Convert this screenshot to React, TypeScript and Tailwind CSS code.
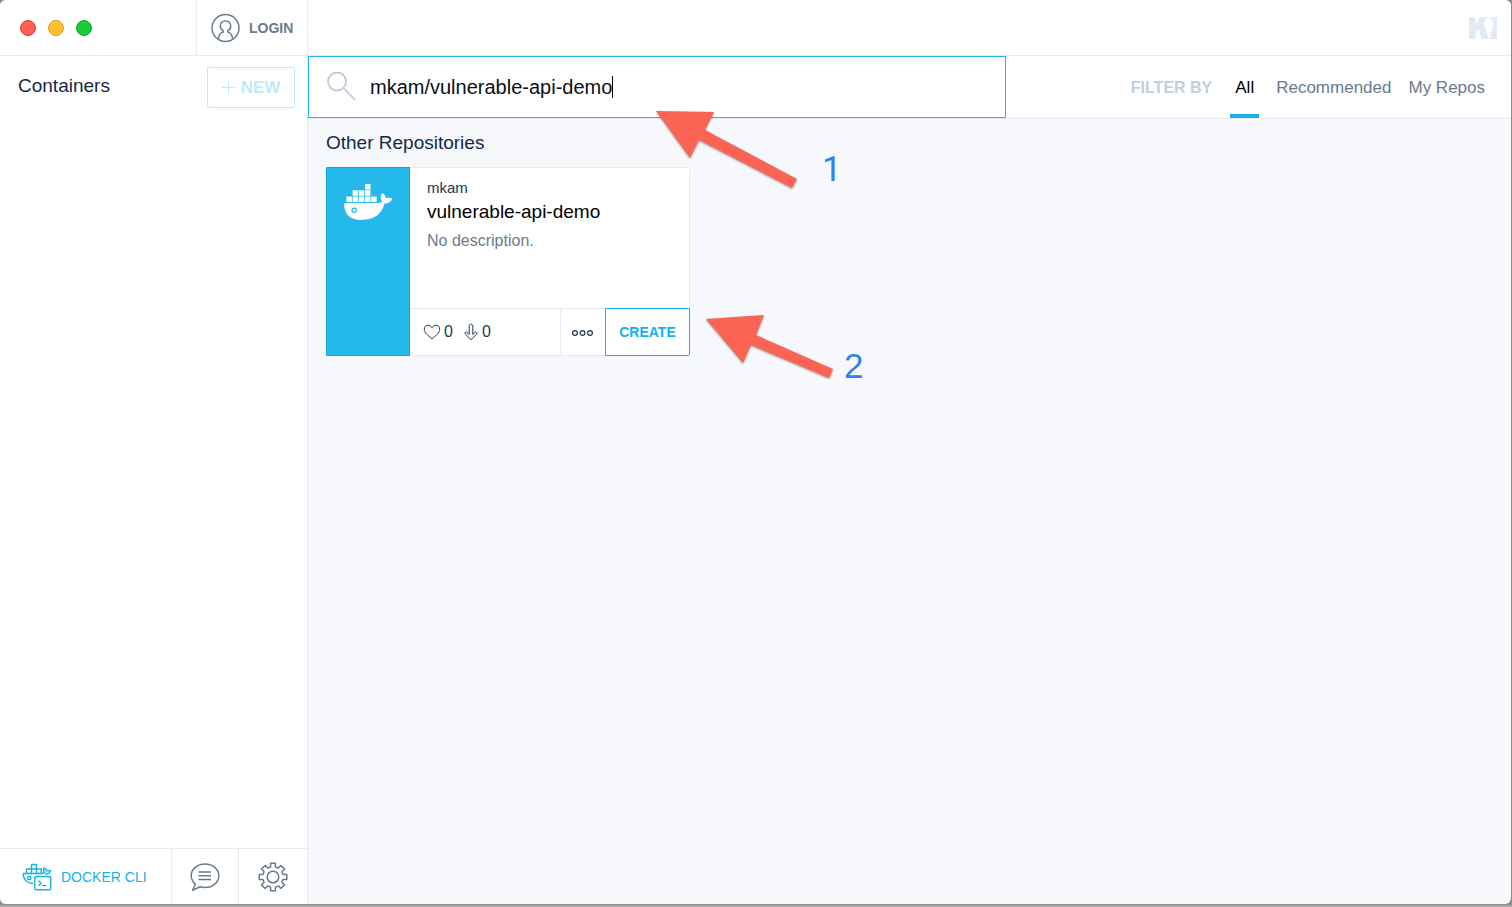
import { useState } from "react";
import type { ReactNode } from "react";

function UserIcon() {
  return (
    <svg viewBox="0 0 30 30" className="size-[30px]" fill="none" stroke="#6b7a8d" strokeWidth="1.5" aria-hidden="true">
      <circle cx="14.500" cy="15" r="13.5" />
      <path d="M7.500 26.400c0-4 1-6.300 4.600-7.300l.2-1.200c-2-1.100-3-2.800-3-4.900 0-2.900 2.200-5 5.200-5s5.200 2.100 5.200 5c0 2.100-1 3.800-3 4.900l.2 1.200c3.600 1 4.600 3.300 4.600 7.300" />
    </svg>
  );
}

function SearchIcon() {
  return (
    <svg viewBox="0 0 30 30" className="size-[30px] shrink-0" fill="none" stroke="#c0c9dc" strokeWidth="1.8" aria-hidden="true">
      <circle cx="11" cy="9.500" r="9" />
      <path d="M18 16.500l11 11.500" />
    </svg>
  );
}

function KitematicLogo() {
  return (
    <svg viewBox="0 0 28 22" className="h-[22px] w-7" fill="#e2eaf3" role="img" aria-label="Kitematic">
      <path d="M0 0h6.500v8L11 0h7.500l-4 6.500L19.500 22H12.500L9.500 12.500l-3 4V22H0z" />
      <path d="M20.500 0H28v22h-7.500L24.700 6.500z" />
    </svg>
  );
}

function WhaleIcon() {
  return (
    <svg viewBox="0 0 50 38" className="h-[38px] w-[50px]" aria-hidden="true">
      <g fill="#fff">
        <path d="M22 1h5.500v5.500H22zM9.600 7.300h5.500v5.500H9.600zM15.800 7.300h5.500v5.500h-5.500zM22 7.300h5.500v5.500H22zM3.400 13.600h5.500v5.500H3.400zM9.600 13.600h5.500v5.500H9.600zM15.800 13.600h5.500v5.500h-5.500zM22 13.600h5.500v5.500H22zM28.200 13.600h5.500v5.500h-5.500z" />
        <path d="M1.200 20H34c2.400 0 4.200-.5 5.300-1.600-2.300-2.600-2.200-5.600 0-8.400 2.400 1.500 3.700 3.300 3.800 5.200 2.400-.9 4.600-.6 6.400.5-1.400 2.800-4.200 4.600-8 4.900C39 30.500 32 37 18 37 6.500 37 .7 30.500 1.200 20z" />
      </g>
      <circle cx="11.200" cy="27.300" r="2.200" fill="#fff" stroke="#24b8eb" strokeWidth="1.2" />
    </svg>
  );
}

function HeartIcon() {
  return (
    <svg viewBox="0 0 18 16" className="h-4 w-[18px]" fill="none" stroke="#22384f" strokeWidth="1" aria-hidden="true">
      <path d="M9 14.800C5 11.500 1.300 8.800 1.300 5.200c0-2.300 1.600-4 3.700-4 1.800 0 3.200 1 4 2.700.8-1.700 2.200-2.700 4-2.700 2.100 0 3.700 1.700 3.700 4 0 3.600-3.700 6.300-7.700 9.600z" />
    </svg>
  );
}

function DownloadIcon() {
  return (
    <svg viewBox="0 0 14 18" className="h-[18px] w-3.5" fill="none" stroke="#22384f" strokeWidth="1" strokeLinejoin="round" aria-hidden="true">
      <path d="M5.200 11.500V2.800C5.200 1.700 6 1.200 7 1.200s1.800.5 1.800 1.600v8.700l2.300-2.200c1-.9 2.600.3 1.700 1.500L7 16.800 1.200 10.800C.3 9.600 1.900 8.400 2.900 9.300z" />
    </svg>
  );
}

function MoreIcon() {
  return (
    <svg viewBox="0 0 22 8" className="h-2 w-[22px]" fill="none" stroke="#22384f" strokeWidth="1.2" aria-hidden="true">
      <circle cx="3" cy="5" r="2.400" />
      <circle cx="10.500" cy="5" r="2.400" />
      <circle cx="18" cy="5" r="2.400" />
    </svg>
  );
}

function DockerCliIcon() {
  return (
    <svg viewBox="0 0 30 28" className="h-7 w-[30px] shrink-0" fill="none" stroke="#12b2e8" strokeWidth="1.4" strokeLinejoin="round" strokeLinecap="round" aria-hidden="true">
      <path d="M4.500 10.500V6h5V1.500h5V6h4.800v4.500M9.500 6v4.500M14.500 6v4.500M9.500 6h5" />
      <path d="M10.500 20.500C5 20 1.200 16.500 1.400 10.500H19c1.800 0 3.300-.3 4-1-1.500-1.300-1.900-3-.9-4.600 1.400.8 2.300 1.700 2.500 3 1.300-.6 2.600-.6 4 0-.7 1.800-2.200 2.700-4 2.800l-.6 1" />
      <circle cx="7.200" cy="15" r="1.600" />
      <rect x="12.800" y="13.500" width="16" height="13.200" rx="1.400" />
      <path d="M16.800 18l2.400 2.200-2.400 2.200M20.700 22.600h3" />
    </svg>
  );
}

function ChatIcon() {
  return (
    <svg viewBox="0 0 30 30" className="size-[30px]" fill="none" stroke="#6b7a8d" strokeWidth="1.5" strokeLinejoin="round" aria-hidden="true">
      <path d="M5.300 22C2.700 19.800 1.200 17 1.200 13.800 1.200 7.200 7.300 2 15 2s13.800 5.200 13.800 11.800S22.700 25.500 15 25.500c-1.700 0-3.400-.2-4.900-.7L2.600 28.300z" />
      <path d="M8.500 10h12.500M8.500 13.800h12.500M8.500 17.600h12.500" />
    </svg>
  );
}

function GearIcon() {
  return (
    <svg viewBox="0 0 30 30" className="size-[30px]" fill="none" stroke="#6b7a8d" strokeWidth="1.5" strokeLinejoin="round" aria-hidden="true">
      <path d="M12.600 1.200h4.800v3.700l2.800 1.200L22.900 3.500l3.600 3.600-2.600 2.700 1.200 2.800h3.700v4.800h-3.700l-1.200 2.800 2.600 2.700-3.600 3.600-2.700-2.600-2.800 1.200v3.700h-4.800v-3.700L9.800 23.900l-2.700 2.600-3.600-3.600 2.600-2.700L4.900 17.400H1.200v-4.800h3.700L6.100 9.800 3.500 7.100l3.600-3.600 2.700 2.600 2.800-1.200z" />
      <circle cx="15" cy="15" r="5.800" />
    </svg>
  );
}

type CalloutProps = { points: string; label: string; className: string; labelClass: string };

function Callout({ points, label, className, labelClass }: CalloutProps) {
  return (
    <div className={`pointer-events-none absolute flex ${className}`}>
      <svg viewBox="0 0 144 84" className="h-[84px] w-36 shrink-0 drop-shadow-[0_1px_1px_rgba(0,0,0,0.4)]" aria-hidden="true">
        <polygon points={points} fill="#fb6454" />
      </svg>
      <span className={`text-[35px] leading-10 text-[#2f80f5] ${labelClass}`}>{label}</span>
    </div>
  );
}

const filters = ["All", "Recommended", "My Repos"];

function FooterButton({ label, className, children }: { label: string; className: string; children: ReactNode }) {
  return (
    <button type="button" aria-label={label} className={`flex items-center justify-center border-l border-[#e4ebf3] ${className}`}>
      {children}
    </button>
  );
}

export default function App() {
  const [query, setQuery] = useState("mkam/vulnerable-api-demo");
  const [filter, setFilter] = useState("All");

  return (
    <div className="flex min-h-screen bg-linear-to-t from-[#b4b4b4] to-[#8c8c8c] to-[3px] pr-px pb-[3px] font-['Liberation_Sans',Arial,sans-serif]">
      <div className="relative flex flex-1 flex-col overflow-hidden rounded-md bg-[#f6f8fc]">
        <header className="flex h-14 border-b border-[#e4ebf3] bg-white">
          <div className="flex w-[308px] shrink-0 border-r border-[#e4ebf3]">
            <div className="flex flex-1 items-center gap-3 pl-5">
              <button type="button" aria-label="Close" className="size-4 rounded-full border border-[#e2342c] bg-[#ff5f55]" />
              <button type="button" aria-label="Minimize" className="size-4 rounded-full border border-[#e0a020] bg-[#ffbe2e]" />
              <button type="button" aria-label="Zoom" className="size-4 rounded-full border border-[#12a42c] bg-[#18cb37]" />
            </div>
            <button type="button" className="flex w-[111px] items-center gap-2 border-l border-[#e4ebf3] pl-3.5 text-[14px] font-bold text-[#6b7a8d]">
              <UserIcon />
              <span className="pt-0.5">LOGIN</span>
            </button>
          </div>
          <div className="flex flex-1 items-center justify-end pr-3.5">
            <KitematicLogo />
          </div>
        </header>

        <div className="flex flex-1">
          <aside className="flex w-[308px] shrink-0 flex-col border-r border-[#e4ebf3] bg-white">
            <div className="flex items-start justify-between pt-[11px] pr-3 pl-[18px]">
              <h2 className="pt-[7px] text-[19px] leading-6 text-[#12294a]">Containers</h2>
              <button type="button" className="flex h-[41px] w-[88px] items-center justify-center gap-1.5 rounded-xs border border-[#bdeafa] text-[17px] font-bold text-[#bdeafa]">
                <svg viewBox="0 0 13 13" className="size-[13px]" stroke="currentColor" aria-hidden="true">
                  <path d="M6.500 0v13M0 6.500h13" />
                </svg>
                NEW
              </button>
            </div>
            <div className="flex-1" />
            <footer className="flex h-14 border-t border-[#e4ebf3]">
              <button type="button" className="flex flex-1 items-center gap-[9px] pl-[22px] text-[14px] text-[#12b2e8]">
                <DockerCliIcon />
                <span className="pt-0.5">DOCKER CLI</span>
              </button>
              <FooterButton label="Feedback" className="w-[67px]"><ChatIcon /></FooterButton>
              <FooterButton label="Preferences" className="w-[69px]"><GearIcon /></FooterButton>
            </footer>
          </aside>

          <main className="flex flex-1 flex-col">
            <div className="flex h-[63px] border-b border-[#e4ebf3] bg-white">
              <label className="flex w-[58%] items-center gap-3.5 border border-[#24b4e8] pl-[17px]">
                <SearchIcon />
                <span className="flex flex-1 items-center">
                  <input
                    aria-label="Search for Docker images"
                    value={query}
                    onChange={(e) => setQuery(e.target.value)}
                    className="h-10 field-sizing-content text-[20px] leading-8 text-[#0b0f14] outline-none"
                  />
                  <span className="h-[22px] w-px bg-black" />
                </span>
              </label>
              <nav aria-label="Filter repositories" className="flex flex-1 items-stretch justify-end gap-[18px] pr-[26px] text-[17px] text-[#6b7a8d]">
                <span className="flex items-center pt-0.5 text-[16px] font-bold text-[#c4cddd]">FILTER BY</span>
                <div className="flex gap-[13px]">
                  {filters.map((name) => (
                    <button
                      key={name}
                      type="button"
                      onClick={() => setFilter(name)}
                      className={
                        name === filter
                          ? "border-b-4 border-[#12b2e8] px-[5px] pt-1.5 text-black"
                          : "border-b-4 border-transparent pt-1.5 pl-1"
                      }
                    >
                      {name}
                    </button>
                  ))}
                </div>
              </nav>
            </div>

            <section className="px-[18px] pt-3">
              <h2 className="text-[19px] leading-6 text-[#12294a]">Other Repositories</h2>
              <article className="mt-3 flex h-[189px] w-[364px] overflow-hidden rounded-xs">
                <div className="flex w-[84px] shrink-0 justify-center border border-[#14a5dc] bg-[#24b8eb] pt-[15px]">
                  <WhaleIcon />
                </div>
                <div className="flex flex-1 flex-col bg-white">
                  <div className="flex-1 border-t border-r border-[#e4ebf3] pt-2 pl-[17px]">
                    <p className="text-[15px] leading-6 text-[#22384f]">mkam</p>
                    <h3 className="text-[19px] leading-6 text-black">vulnerable-api-demo</h3>
                    <p className="mt-[5px] text-[16px] leading-6 text-[#6b7a8d]">No description.</p>
                  </div>
                  <div className="flex h-12 text-[#22384f]">
                    <div className="flex flex-1 items-center gap-[11px] border-y border-[#e4ebf3] pl-[13px] text-[16px]">
                      <span className="flex items-center gap-[3px]"><HeartIcon />0</span>
                      <span className="flex items-center gap-1"><DownloadIcon />0</span>
                    </div>
                    <button type="button" aria-label="More" className="flex w-[45px] items-center justify-center border-y border-l border-[#e4ebf3]">
                      <MoreIcon />
                    </button>
                    <button type="button" className="w-[85px] rounded-br-xs border border-[#12b2e8] text-[14px] font-bold text-[#12b2e8]">
                      CREATE
                    </button>
                  </div>
                </div>
              </article>
            </section>
          </main>
        </div>

        <Callout
          label="1"
          className="top-[108px] left-[654px] gap-6"
          labelClass="pt-[42px] font-['Roboto',sans-serif]"
          points="2,3 60,4 51,22 143,71 138,80 45,32 36,50"
        />
        <Callout
          label="2"
          className="top-[314px] left-[704px] -space-x-1"
          labelClass="pt-8"
          points="2,5 60,1 52,21 129,55 125,64 47,31 39,49"
        />
      </div>
    </div>
  );
}
